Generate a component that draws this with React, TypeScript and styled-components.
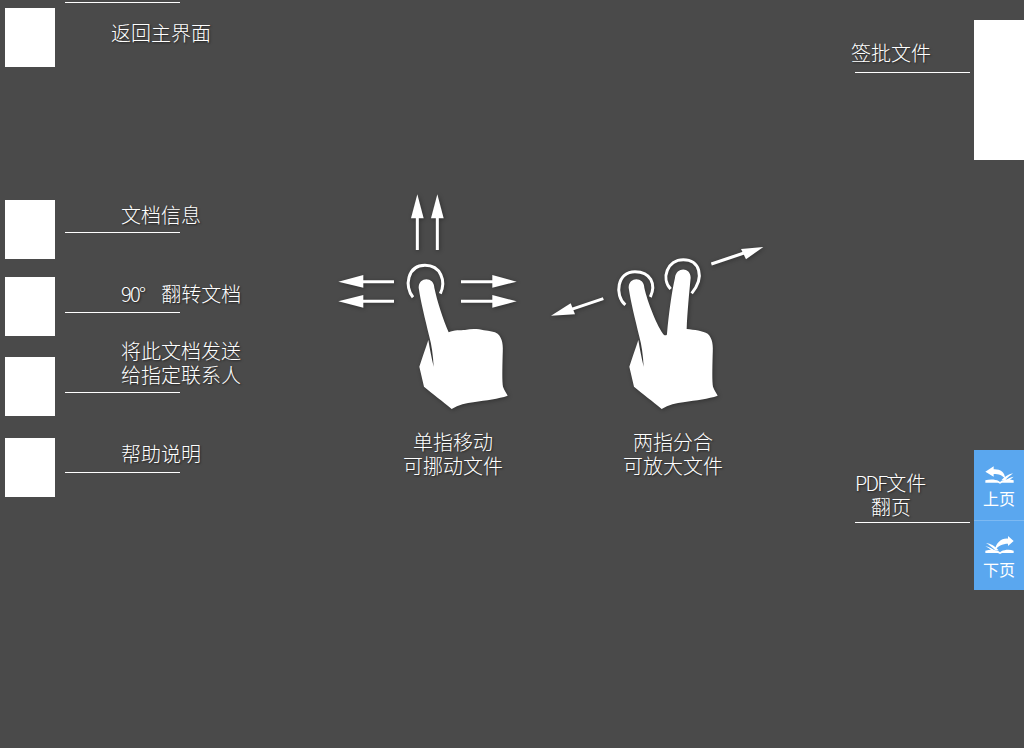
import React from 'react';
import styled, { createGlobalStyle } from 'styled-components';

const GlobalStyle = createGlobalStyle`
  html, body {
    margin: 0;
    padding: 0;
    background: #4a4a4a;
  }
`;

const Page = styled.div`
  display: flex;
  width: 1024px;
  height: 748px;
  overflow: hidden;
  background: #4a4a4a;
  color: #fff;
  font-family: "Noto Sans CJK SC", "Liberation Sans", sans-serif;
  font-size: 20px;
  font-weight: 300;
  line-height: 24px;
  text-shadow: 1px 1px 2px rgba(0, 0, 0, 0.55);
`;

const LeftColumn = styled.div`
  display: flex;
  flex-direction: column;
  width: 343px;
  flex: none;
  padding: 8px 0 0 5px;
  box-sizing: border-box;
`;

const MenuRow = styled.div<{ $gap: number }>`
  display: flex;
  gap: 10px;
  height: 59px;
  margin-top: ${({ $gap }) => $gap}px;
`;

const Square = styled.div`
  width: 50px;
  height: 59px;
  background: #fff;
  flex: none;
`;

const MenuLabel = styled.div<{ $line: number; $pad: number }>`
  display: flex;
  flex-direction: column;
  justify-content: flex-end;
  width: 115px;
  height: ${({ $line }) => $line}px;
  padding: 0 0 ${({ $pad }) => $pad}px 56px;
  box-sizing: border-box;
  border-bottom: 1px solid #fff;
  white-space: nowrap;
`;

const HomeLabel = styled.div`
  width: 115px;
  height: 43px;
  margin-top: -6px;
  padding: 18px 0 0 46px;
  box-sizing: border-box;
  border-top: 1px solid #fff;
  white-space: nowrap;
`;

const Gestures = styled.div`
  display: flex;
  flex: none;
  padding-top: 185px;
`;

const Gesture = styled.figure`
  display: flex;
  flex-direction: column;
  align-items: center;
  width: 220px;
  margin: 0;
`;

const GestureArt = styled.svg`
  display: block;
  width: 220px;
  height: 245px;
  overflow: visible;
  filter: drop-shadow(1px 1px 2px rgba(0, 0, 0, 0.35));
`;

const Caption = styled.figcaption`
  text-align: center;
  white-space: nowrap;
`;

const RightColumn = styled.div`
  display: flex;
  flex-direction: column;
  align-items: flex-end;
  margin-left: auto;
  padding-top: 20px;
`;

const SideRow = styled.div<{ $gap: number }>`
  display: flex;
  gap: 4px;
  margin-top: ${({ $gap }) => $gap}px;
`;

const SideLabel = styled.div<{ $height: number; $pad: number }>`
  width: 115px;
  height: ${({ $height }) => $height}px;
  padding-bottom: ${({ $pad }) => $pad}px;
  box-sizing: border-box;
  border-bottom: 1px solid #fff;
  display: flex;
  flex-direction: column;
  justify-content: flex-end;
  white-space: nowrap;
`;

const LabelLine = styled.span<{ $indent: number }>`
  display: block;
  height: 24px;
  margin-left: ${({ $indent }) => $indent}px;
`;

const Latin = styled.span<{ $after?: number }>`
  letter-spacing: -1.7px;
  margin-right: ${({ $after }) => $after ?? 0}px;
`;

const SignTab = styled.div`
  width: 50px;
  height: 140px;
  background: #fff;
`;

const PageTabs = styled.div`
  display: flex;
  flex-direction: column;
  width: 50px;
`;

const PageTab = styled.div<{ $divider?: boolean }>`
  display: flex;
  flex-direction: column;
  align-items: center;
  height: 70px;
  box-sizing: border-box;
  padding-top: ${({ $divider }) => ($divider ? 14 : 15)}px;
  background: #5aa7ef;
  border-top: ${({ $divider }) => ($divider ? '1px solid #7db9f2' : 'none')};
  font-size: 16px;
  font-weight: 400;
  line-height: 20px;
  text-shadow: none;
`;

const BookIcon = styled.svg<{ $after: number }>`
  display: block;
  width: 31px;
  height: 19px;
  margin-bottom: ${({ $after }) => $after}px;
`;

const Tip = ({ d }: { d: string }) => <path d={d} fill="#fff" />;

const Shaft = ({ d }: { d: string }) => <path d={d} stroke="#fff" strokeWidth={9} fill="none" />;

const Ring = ({ d }: { d: string }) => <path d={d} stroke="#fff" strokeWidth={9} fill="none" />;

const SingleHand = () => (
  <GestureArt viewBox="343 185 220 245">
    <g transform="translate(330 185) scale(0.33333)">
      <Shaft d="M262 195V90M322 195V90M192 290H90M192 349H90M393 290H495M393 349H495" />
      <Tip d="M262 28L281 100H243Z" />
      <Tip d="M322 28L341 100H303Z" />
      <Tip d="M25 290L100 270V308Z" />
      <Tip d="M25 349L100 330V368Z" />
      <Tip d="M560 290L487 270V308Z" />
      <Tip d="M560 349L487 330V368Z" />
      <Ring d="M249 337C222 305 232 241 285 241C332 241 349 288 331 326" />
      <Tip d="M266 308C266 274 312 274 313 308C322 350 338 400 356 442C372 434 392 436 405 435C425 430 445 431 462 436C478 438 494 440 503 446C518 460 520 480 518 510C517 550 516 590 519 605C524 618 530 625 533 632C505 642 470 645 430 652C410 654 385 660 365 672C340 650 305 625 282 605C278 585 272 565 268 545C276 520 287 490 295 465C299 490 305 520 311 545C309 510 305 480 298 455C285 400 272 350 266 308Z" />
    </g>
  </GestureArt>
);

const DoubleHand = () => (
  <GestureArt viewBox="563 185 220 245">
    <g transform="translate(540 235) scale(0.33333)">
      <Shaft d="M514 87L612 54M190 191L92 224" />
      <Tip d="M670 36L618 73L603 42Z" />
      <Tip d="M33 242L92 205L105 238Z" />
      <Ring d="M256 210C222 180 232 110 285 110C332 110 349 148 331 186" />
      <Ring d="M392 162C362 130 382 74 430 74C478 74 496 125 455 175" />
      <Tip d="M266 158C266 124 312 124 313 158C322 200 352 275 372 300C378 302 381 300 381 296C386 240 395 170 405 128C408 95 452 95 452 128C448 170 442 230 440 282C462 284 490 288 503 296C518 310 520 330 518 360C517 400 516 440 519 455C524 468 530 475 533 482C505 492 470 495 430 502C410 504 385 510 365 522C340 500 305 475 282 455C278 435 272 415 268 395C276 370 287 340 295 315C299 340 305 370 311 395C309 360 305 330 298 305C285 250 272 200 266 158Z" />
    </g>
  </GestureArt>
);

const PrevBook = () => (
  <BookIcon viewBox="418 72 93 57" $after={4}>
    <Tip d="M422 92L447 76V85C466 84 480 92 482 114C474 103 462 99 447 99V107Z" />
    <Tip d="M422 118C436 114 452 115 462 120L466 123L470 120C480 115 495 114 507 118V125H472L466 128L460 125H422Z" />
    <Tip d="M470 118C478 108 490 100 505 97C497 104 488 110 482 118Z" />
    <Tip d="M484 118C490 112 498 108 507 107C502 111 497 115 494 118Z" />
  </BookIcon>
);

const NextBook = () => (
  <BookIcon viewBox="418 282 93 57" $after={5}>
    <Tip d="M507 300L490 285V293C470 291 455 305 450 328C458 316 474 308 490 308V315Z" />
    <Tip d="M422 329C436 325 452 326 462 331L466 334L470 331C480 326 495 325 507 329V336H472L466 339L460 336H422Z" />
    <Tip d="M424 306C438 308 452 315 462 328L452 328C444 320 434 312 424 306Z" />
    <Tip d="M422 316C432 317 442 322 450 329L442 329C436 324 430 320 422 316Z" />
  </BookIcon>
);

const App = () => (
  <Page>
    <GlobalStyle />
    <LeftColumn>
      <MenuRow $gap={0}>
        <Square />
        <HomeLabel>返回主界面</HomeLabel>
      </MenuRow>
      <MenuRow $gap={133}>
        <Square />
        <MenuLabel $line={33} $pad={5}>文档信息</MenuLabel>
      </MenuRow>
      <MenuRow $gap={18}>
        <Square />
        <MenuLabel $line={36} $pad={6}><span><Latin $after={8}>90°</Latin>&nbsp;&nbsp;翻转文档</span></MenuLabel>
      </MenuRow>
      <MenuRow $gap={21}>
        <Square />
        <MenuLabel $line={36} $pad={5}>
          <LabelLine $indent={0}>将此文档发送</LabelLine>
          <LabelLine $indent={0}>给指定联系人</LabelLine>
        </MenuLabel>
      </MenuRow>
      <MenuRow $gap={22}>
        <Square />
        <MenuLabel $line={35} $pad={6}>帮助说明</MenuLabel>
      </MenuRow>
    </LeftColumn>
    <Gestures>
      <Gesture>
        <SingleHand />
        <Caption>单指移动<br />可挪动文件</Caption>
      </Gesture>
      <Gesture>
        <DoubleHand />
        <Caption>两指分合<br />可放大文件</Caption>
      </Gesture>
    </Gestures>
    <RightColumn>
      <SideRow $gap={0}>
        <SideLabel $height={53} $pad={7}>
          <LabelLine $indent={-4}>签批文件</LabelLine>
        </SideLabel>
        <SignTab />
      </SideRow>
      <SideRow $gap={290}>
        <SideLabel $height={73} $pad={3}>
          <LabelLine $indent={0}><Latin>PDF</Latin>文件</LabelLine>
          <LabelLine $indent={16}>翻页</LabelLine>
        </SideLabel>
        <PageTabs>
          <PageTab>
            <PrevBook />
            上页
          </PageTab>
          <PageTab $divider>
            <NextBook />
            下页
          </PageTab>
        </PageTabs>
      </SideRow>
    </RightColumn>
  </Page>
);

export default App;
